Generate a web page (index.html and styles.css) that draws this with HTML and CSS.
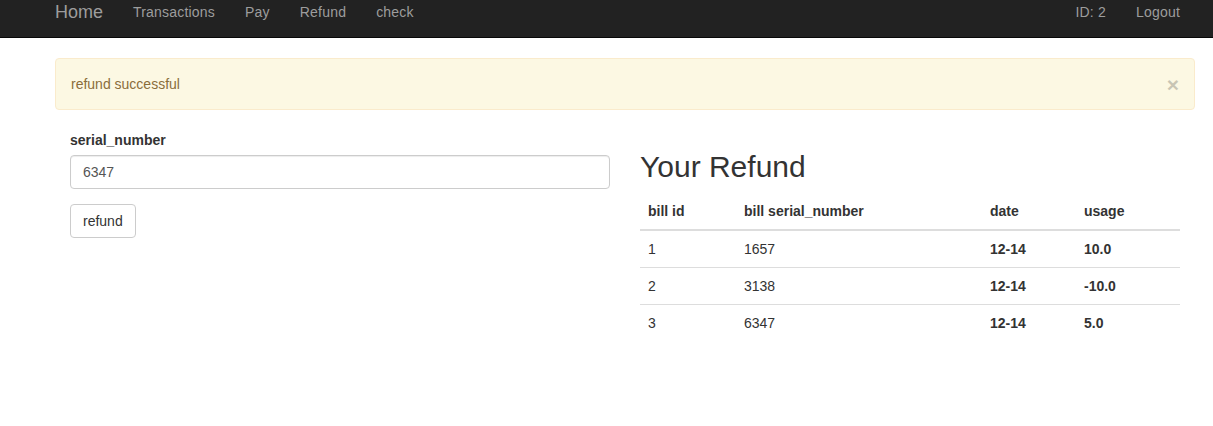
FILE: index.html
```html
<!DOCTYPE html>
<html>
<head>
<meta charset="utf-8">
<link rel="stylesheet" href="styles.css">
</head>
<body>
<nav class="navbar">
  <div class="container nav-inner">
    <div class="nav-left">
      <a class="brand" href="#">Home</a>
      <a class="nav-link" href="#">Transactions</a>
      <a class="nav-link" href="#">Pay</a>
      <a class="nav-link" href="#">Refund</a>
      <a class="nav-link" href="#">check</a>
    </div>
    <div class="nav-right">
      <a class="nav-link" href="#">ID: 2</a>
      <a class="nav-link" href="#">Logout</a>
    </div>
  </div>
</nav>
<div class="container">
  <div class="alert">
    <span>refund successful</span>
    <span class="close">&times;</span>
  </div>
  <div class="inner">
    <div class="row">
      <div class="col">
        <form class="form">
          <div class="form-group">
            <label class="label">serial_number</label>
            <input class="input" type="text" value="6347">
          </div>
          <button class="btn" type="button">refund</button>
        </form>
      </div>
      <div class="col">
        <h2 class="title">Your Refund</h2>
        <table class="table">
          <thead>
            <tr><th class="c1">bill id</th><th class="c2">bill serial_number</th><th class="c3">date</th><th class="c4">usage</th></tr>
          </thead>
          <tbody>
            <tr><td>1</td><td>1657</td><th>12-14</th><th>10.0</th></tr>
            <tr><td>2</td><td>3138</td><th>12-14</th><th>-10.0</th></tr>
            <tr><td>3</td><td>6347</td><th>12-14</th><th>5.0</th></tr>
          </tbody>
        </table>
      </div>
    </div>
  </div>
</div>
</body>
</html>
```
FILE: styles.css
```css
* { box-sizing: border-box; }
html, body { margin: 0; }
body {
  font-family: "Liberation Sans", Arial, sans-serif;
  font-size: 14px;
  line-height: 20px;
  color: #333;
  background: #fff;
}
a { text-decoration: none; }
.container {
  width: 1170px;
  margin-left: 40px;
  padding: 0 15px;
}
.navbar {
  background: #222;
  height: 38px;
  border-bottom: 1px solid #080808;
  margin-bottom: 20px;
}
.nav-inner {
  display: flex;
  justify-content: space-between;
  padding: 0;
}
.nav-left, .nav-right { display: flex; }
.nav-right { padding-right: 15px; }
.brand {
  font-size: 18px;
  line-height: 20px;
  padding: 2px 15px 0 15px;
  color: #9d9d9d;
}
.nav-link {
  font-size: 14px;
  line-height: 20px;
  letter-spacing: 0.2px;
  padding: 2px 15px 0 15px;
  color: #9d9d9d;
}
.alert {
  display: flex;
  justify-content: space-between;
  align-items: center;
  background: #fcf8e3;
  border: 1px solid #faebcc;
  color: #8a6d3b;
  border-radius: 4px;
  padding: 15px 15px 15px 15px;
  margin-bottom: 20px;
  height: 52px;
}
.close {
  font-size: 21px;
  font-weight: bold;
  line-height: 1;
  color: #000;
  opacity: 0.2;
}
.inner { padding: 0 15px; }
.row { display: flex; gap: 30px; }
.col { width: 540px; }
.form-group { margin-bottom: 15px; }
.label {
  display: block;
  font-weight: bold;
  margin-bottom: 5px;
}
.input {
  display: block;
  width: 100%;
  height: 34px;
  padding: 6px 12px;
  font-family: inherit;
  font-size: 14px;
  color: #555;
  border: 1px solid #ccc;
  border-radius: 4px;
  box-shadow: inset 0 1px 1px rgba(0,0,0,.075);
  background: #fff;
}
.btn {
  font-family: inherit;
  font-size: 14px;
  line-height: 20px;
  padding: 6px 12px;
  color: #333;
  background: #fff;
  border: 1px solid #ccc;
  border-radius: 4px;
}
.title {
  font-size: 30px;
  font-weight: 500;
  line-height: 33px;
  margin: 20px 0 10px;
}
.table {
  width: 100%;
  border-collapse: collapse;
  border-spacing: 0;
}
.table th, .table td {
  text-align: left;
  padding: 8px;
  line-height: 20px;
  border-top: 1px solid #ddd;
}
.table thead th {
  border-top: 0;
  border-bottom: 2px solid #ddd;
}
.table tbody tr:first-child td, .table tbody tr:first-child th { border-top: 0; }
.c1 { width: 96px; }
.c2 { width: 246px; }
.c3 { width: 94px; }
.c4 { width: 104px; }
```
